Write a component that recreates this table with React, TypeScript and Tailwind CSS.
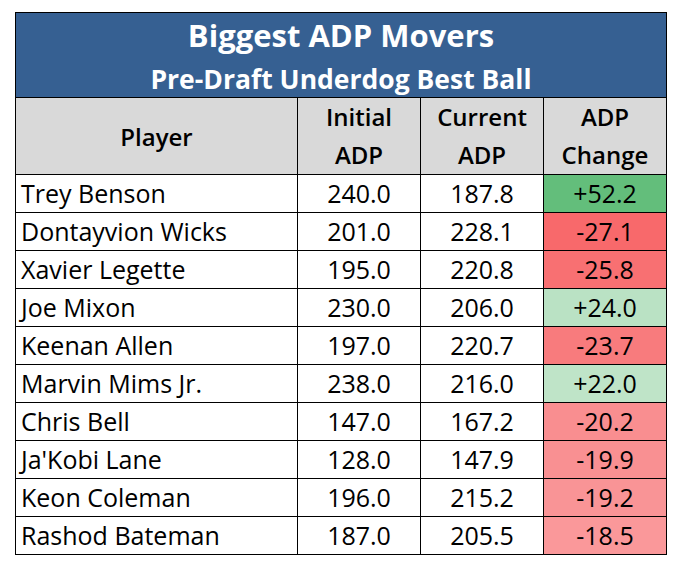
import React from "react";

type Row = { name: string; init: string; cur: string; chg: string; bg: string };

const rows: Row[] = [
  { name: "Trey Benson", init: "240.0", cur: "187.8", chg: "+52.2", bg: "bg-[#63be7b]" },
  { name: "Dontayvion Wicks", init: "201.0", cur: "228.1", chg: "-27.1", bg: "bg-[#f8696b]" },
  { name: "Xavier Legette", init: "195.0", cur: "220.8", chg: "-25.8", bg: "bg-[#f87072]" },
  { name: "Joe Mixon", init: "230.0", cur: "206.0", chg: "+24.0", bg: "bg-[#bae2c4]" },
  { name: "Keenan Allen", init: "197.0", cur: "220.7", chg: "-23.7", bg: "bg-[#f87b7d]" },
  { name: "Marvin Mims Jr.", init: "238.0", cur: "216.0", chg: "+22.0", bg: "bg-[#bfe4c8]" },
  { name: "Chris Bell", init: "147.0", cur: "167.2", chg: "-20.2", bg: "bg-[#f98e90]" },
  { name: "Ja'Kobi Lane", init: "128.0", cur: "147.9", chg: "-19.9", bg: "bg-[#f99092]" },
  { name: "Keon Coleman", init: "196.0", cur: "215.2", chg: "-19.2", bg: "bg-[#f99496]" },
  { name: "Rashod Bateman", init: "187.0", cur: "205.5", chg: "-18.5", bg: "bg-[#fa989a]" },
];

export default function App() {
  return (
    <div className="w-[682px] h-[567px] bg-white pt-[12px] pl-[15px] font-['Open_Sans',sans-serif] text-black">
      <div className="w-[652px] border border-black">
        <div className="h-[84px] bg-[#366092] text-white font-bold flex flex-col items-center">
          <div className="text-[31px] leading-[31px] mt-[7px]">Biggest ADP Movers</div>
          <div className="text-[26.5px] leading-[27px] mt-[15px]">Pre-Draft Underdog Best Ball</div>
        </div>
        <div className="grid grid-cols-[281px_123px_123px_123px] h-[77px] border-t border-black bg-[#d9d9d9] font-semibold text-[24px] leading-[38px]">
          <div className="flex items-center justify-center">Player</div>
          <div className="border-l border-black flex flex-col items-center justify-center pb-[2px]">
            <span>Initial</span>
            <span>ADP</span>
          </div>
          <div className="border-l border-black flex flex-col items-center justify-center pb-[2px]">
            <span>Current</span>
            <span>ADP</span>
          </div>
          <div className="border-l border-black flex flex-col items-center justify-center pb-[2px]">
            <span>ADP</span>
            <span>Change</span>
          </div>
        </div>
        {rows.map((r) => (
          <div
            key={r.name}
            className="grid grid-cols-[281px_123px_123px_123px] h-[38px] border-t border-black text-[25px] leading-[37px]"
          >
            <div className="pl-[5px] whitespace-nowrap">{r.name}</div>
            <div className="border-l border-black text-center">{r.init}</div>
            <div className="border-l border-black text-center">{r.cur}</div>
            <div className={`border-l border-black text-center ${r.bg}`}>{r.chg}</div>
          </div>
        ))}
      </div>
    </div>
  );
}
